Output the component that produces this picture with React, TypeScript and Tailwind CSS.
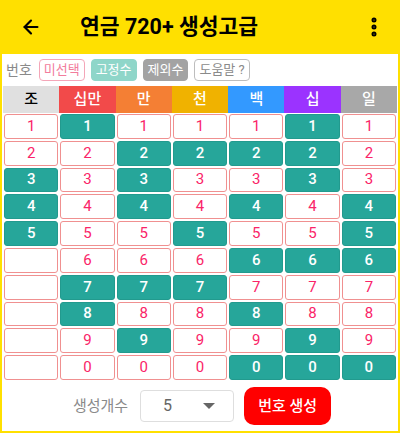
import { ArrowLeft, EllipsisVertical } from "lucide-react";
import clsx from "clsx";

const HEADERS = [
  { label: "조", className: "bg-[#e0e0e0] text-black" },
  { label: "십만", className: "bg-[#f24a4a] text-white" },
  { label: "만", className: "bg-[#f47f34] text-white" },
  { label: "천", className: "bg-[#f0b200] text-white" },
  { label: "백", className: "bg-[#3399ff] text-white" },
  { label: "십", className: "bg-[#9b33ff] text-white" },
  { label: "일", className: "bg-[#a8a8a8] text-white" },
];

// teal (fixed) cells per row, by column index
const FIXED: number[][] = [
  [1, 5],
  [2, 3, 4, 5],
  [0, 2, 5],
  [0, 2, 4, 6],
  [0, 3, 6],
  [4, 5, 6],
  [1, 2, 3],
  [1, 4],
  [2, 5],
  [4, 5, 6],
];

const DIGITS = ["1", "2", "3", "4", "5", "6", "7", "8", "9", "0"];

function Cell({ value, fixed }: { value: string; fixed: boolean }) {
  return (
    <div
      className={clsx(
        "m-[1px] flex items-center justify-center rounded-[3px] border text-[15px] leading-none",
        fixed
          ? "border-[#229a8e] bg-[#26a69a] font-medium text-white"
          : "border-[#f09090] bg-white text-[#fa2468]"
      )}
    >
      {value}
    </div>
  );
}

export default function App() {
  return (
    <div
      className="flex h-[433px] w-[400px] flex-col bg-[#ffe000]"
      style={{ fontFamily: "Roboto, 'Noto Sans CJK KR', sans-serif" }}
    >
      <header className="flex h-[54px] items-center px-[20px]">
        <ArrowLeft className="h-[22px] w-[22px] text-black" strokeWidth={2.4} />
        <h1 className="ml-[38px] flex-1 text-[21.5px] font-bold text-black">연금 720+ 생성고급</h1>
        <EllipsisVertical className="mr-[-6px] h-[24px] w-[24px] text-black" strokeWidth={3} />
      </header>

      <main className="mx-[2px] mb-[2px] flex flex-1 flex-col bg-white">
        <div className="flex h-[32px] items-center gap-[6px] px-[4px] text-[13px] leading-[16px]">
          <span className="mr-[1px] text-[14px] text-[#8a8a8a]">번호</span>
          <span className="rounded-[4px] border border-[#f4a6b8] px-[4px] py-[2px] text-[#f27c9c]">미선택</span>
          <span className="rounded-[4px] border border-[#8fd6c9] bg-[#8fd6c9] px-[4px] py-[2px] text-white">고정수</span>
          <span className="rounded-[4px] border border-[#a3a3a3] bg-[#a3a3a3] px-[4px] py-[2px] text-white">제외수</span>
          <span className="rounded-[4px] border border-[#bdbdbd] px-[4px] py-[2px] text-[#8a8a8a]">도움말 ?</span>
        </div>

        <div className="px-[1px]">
          <div className="grid h-[27px] grid-cols-7">
            {HEADERS.map((h) => (
              <div key={h.label} className={clsx("flex items-center justify-center text-[15px] font-medium", h.className)}>
                {h.label}
              </div>
            ))}
          </div>
          <div className="grid grid-cols-7 grid-rows-[repeat(10,26.8px)]">
            {DIGITS.map((digit, row) =>
              HEADERS.map((_, col) => (
                <Cell
                  key={`${row}-${col}`}
                  value={col === 0 && row > 4 ? "" : digit}
                  fixed={FIXED[row].includes(col)}
                />
              ))
            )}
          </div>
        </div>

        <div className="flex flex-1 items-center justify-center gap-[10px] pl-[4px]">
          <span className="mr-[2px] text-[15px] text-[#8a8a8a]">생성개수</span>
          <div className="flex h-[32px] w-[94px] items-center justify-between rounded-[4px] border border-[#dedede] pl-[22px] pr-[18px] text-[16px] text-[#666]">
            <span>5</span>
            <span className="h-0 w-0 border-x-[6px] border-t-[6px] border-x-transparent border-t-[#666]" />
          </div>
          <button className="h-[38px] w-[87px] rounded-[10px] bg-[#ff0000] text-[15px] font-medium text-white">
            번호 생성
          </button>
        </div>
      </main>
    </div>
  );
}
